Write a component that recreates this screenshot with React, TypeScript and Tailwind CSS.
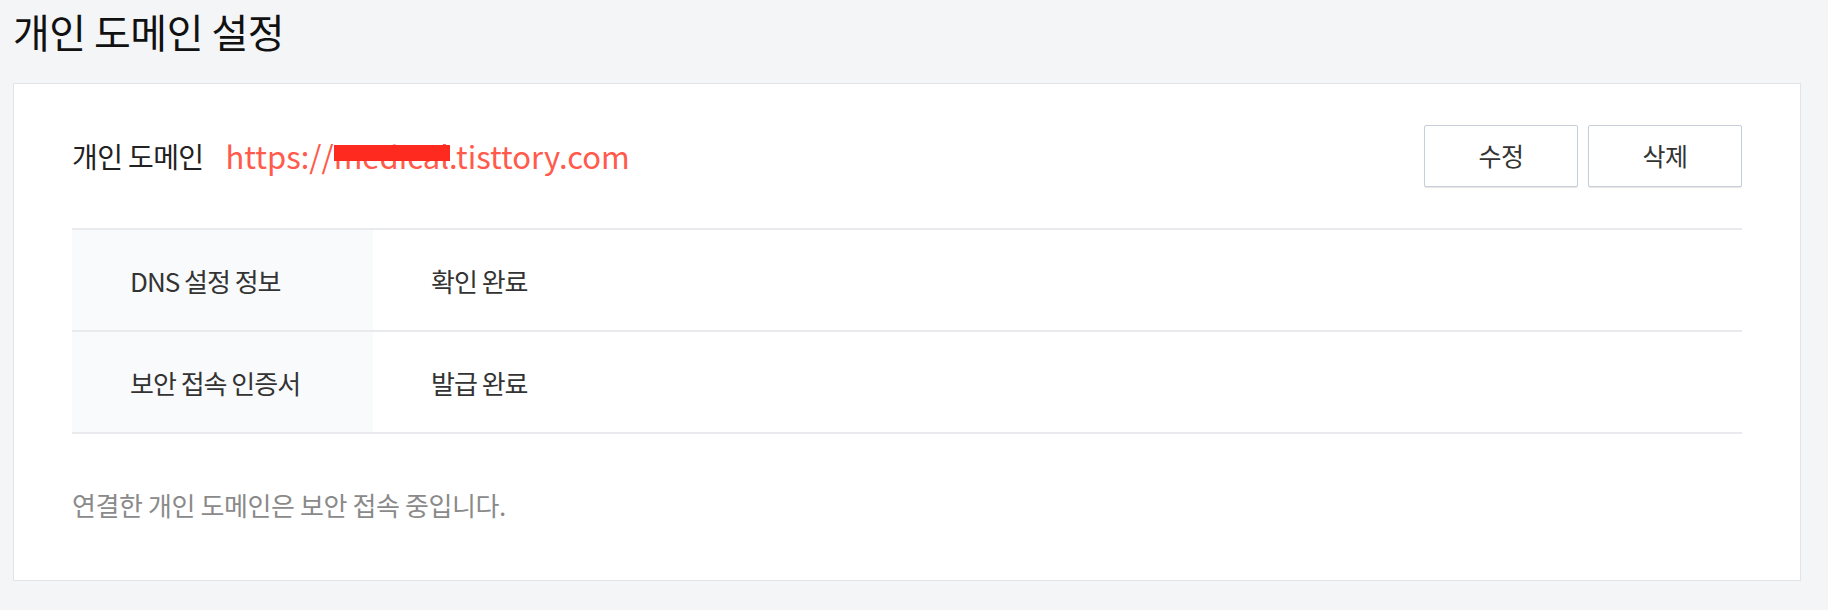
export default function App() {
  const rows = [
    { label: "DNS 설정 정보", value: "확인 완료" },
    { label: "보안 접속 인증서", value: "발급 완료" },
  ];

  return (
    <div
      className="min-h-screen w-full bg-[#f4f5f7] px-[13px] pt-[8px] pb-[30px] text-[#222]"
      style={{ fontFamily: '"Noto Sans CJK KR", "Noto Sans", sans-serif' }}
    >
      <h1 className="text-[40px] leading-[46px] font-normal tracking-[-0.5px] text-[#111]">
        개인 도메인 설정
      </h1>

      <div className="mt-[29px] w-[1788px] border border-[#dfe3ea] bg-white px-[58px] pt-[41px] pb-[59px]">
        {/* domain row */}
        <div className="flex h-[62px] items-center justify-between">
          <div className="flex items-center">
            <span className="text-[28px] tracking-[-0.6px] text-[#222]">개인 도메인</span>
            <span className="relative ml-[22px] text-[31px] text-[#ff5a4c]">
              https://medical.tisttory.com
              <span className="absolute left-[109px] top-[12px] h-[16px] w-[116px] bg-[#ff2a1f]" />
            </span>
          </div>
          <div className="flex gap-[10px]">
            <button className="h-[62px] w-[154px] rounded-[2px] border border-[#c5ced9] bg-white text-[25px] tracking-[-0.5px] text-[#333] shadow-[0_1px_1px_rgba(0,0,0,0.1)]">
              수정
            </button>
            <button className="h-[62px] w-[154px] rounded-[2px] border border-[#c5ced9] bg-white text-[25px] tracking-[-0.5px] text-[#333] shadow-[0_1px_1px_rgba(0,0,0,0.1)]">
              삭제
            </button>
          </div>
        </div>

        {/* info table */}
        <div className="mt-[41px] border-t-2 border-[#e8eaee]">
          {rows.map((r) => (
            <div key={r.label} className="flex h-[102px] border-b-2 border-[#e8eaee]">
              <div className="flex w-[301px] items-center bg-[#f9fafb] pl-[58px] text-[26px] tracking-[-1px] text-[#333]">
                {r.label}
              </div>
              <div className="flex items-center pl-[58px] text-[26px] tracking-[-1px] text-[#333]">
                {r.value}
              </div>
            </div>
          ))}
        </div>

        <p className="mt-[55px] text-[26px] leading-[32px] tracking-[-0.4px] text-[#8a8a8a]">
          연결한 개인 도메인은 보안 접속 중입니다.
        </p>
      </div>
    </div>
  );
}
